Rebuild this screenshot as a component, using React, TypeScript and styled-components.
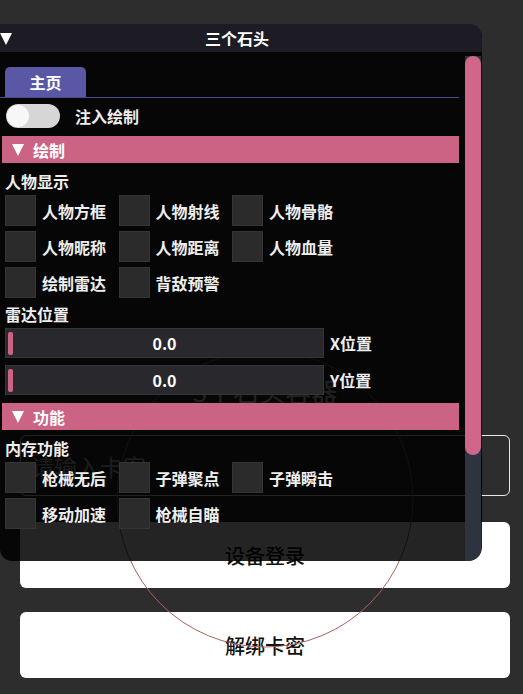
import React, { FC } from "react";
import styled, { createGlobalStyle } from "styled-components";

const GlobalStyle = createGlobalStyle`
  html, body {
    margin: 0;
    padding: 0;
    background: #2d2d2d;
  }
  body {
    font-family: "Noto Sans CJK SC", "Noto Sans", sans-serif;
  }
`;

const PINK = "#cb6384";

const checkRows1 = [
  ["人物方框", "人物射线", "人物骨骼"],
  ["人物昵称", "人物距离", "人物血量"],
  ["绘制雷达", "背敌预警"],
];

const checkRows2 = [
  ["枪械无后", "子弹聚点", "子弹瞬击"],
  ["移动加速", "枪械自瞄"],
];

const CheckGroup: FC<{ rows: string[][] }> = ({ rows }) => (
  <CheckGrid>
    {rows.flat().map((name) => (
      <CheckItem key={name}>
        <CheckBox />
        <ItemText>{name}</ItemText>
      </CheckItem>
    ))}
  </CheckGrid>
);

const App: FC<{}> = () => {
  return (
    <React.Fragment>
      <GlobalStyle />
      <Page>
        <Underlay>
          <BrandTitle>3个石头容器</BrandTitle>
          <KeyInput placeholder="请输入卡密" />
          <ActionButton $gap={26}>设备登录</ActionButton>
          <ActionButton $gap={24}>解绑卡密</ActionButton>
        </Underlay>
        <RingDecor width="523" height="694" viewBox="0 0 523 694">
          <circle cx="265" cy="499" r="148" fill="none" stroke="#a8625f" strokeWidth="1" />
        </RingDecor>

        <Window>
          <TitleBar>
            <Arrow />
            <WindowTitle>三个石头</WindowTitle>
          </TitleBar>
          <Body>
            <Content>
              <TabBar>
                <Tab>主页</Tab>
              </TabBar>
              <ToggleRow>
                <Switch>
                  <Knob />
                </Switch>
                <ItemText>注入绘制</ItemText>
              </ToggleRow>

              <SectionHeader>
                <Arrow />
                <span>绘制</span>
              </SectionHeader>
              <GroupLabel $top={6}>人物显示</GroupLabel>
              <CheckGroup rows={checkRows1} />

              <GroupLabel $top={4}>雷达位置</GroupLabel>
              <SliderRow $top={2}>
                <SliderTrack>
                  <SliderGrab />
                  0.0
                </SliderTrack>
                <ItemText>X位置</ItemText>
              </SliderRow>
              <SliderRow $top={7}>
                <SliderTrack>
                  <SliderGrab />
                  0.0
                </SliderTrack>
                <ItemText>Y位置</ItemText>
              </SliderRow>

              <SectionHeader>
                <Arrow />
                <span>功能</span>
              </SectionHeader>
              <GroupLabel $top={6}>内存功能</GroupLabel>
              <CheckGroup rows={checkRows2} />
            </Content>
            <Scrollbar>
              <ScrollThumb />
            </Scrollbar>
          </Body>
        </Window>
      </Page>
    </React.Fragment>
  );
};

export default App;

const Page = styled.div`
  position: relative;
  width: 100%;
  height: 694px;
  overflow: hidden;
  background: #2d2d2d;
`;

const Underlay = styled.div`
  display: flex;
  flex-direction: column;
  padding: 375px 13px 0 20px;
`;

const BrandTitle = styled.div`
  height: 31px;
  line-height: 31px;
  text-align: center;
  font-size: 26px;
  color: #e6e6e6;
`;

const KeyInput = styled.input`
  box-sizing: border-box;
  margin-top: 29px;
  height: 61px;
  padding: 0 10px;
  border: 1px solid #e8e8e8;
  border-radius: 6px;
  background: transparent;
  font-family: inherit;
  font-size: 23px;
  color: #fff;
  outline: none;
  &::placeholder {
    color: #c4c4c4;
  }
`;

const ActionButton = styled.button<{ $gap: number }>`
  margin-top: ${(p) => p.$gap}px;
  height: 66px;
  border: none;
  border-radius: 6px;
  background: #fff;
  font-family: inherit;
  font-size: 20px;
  font-weight: 500;
  color: #111;
`;

const RingDecor = styled.svg`
  position: absolute;
  left: 0;
  top: 0;
  pointer-events: none;
`;

const Window = styled.div`
  position: absolute;
  left: 0;
  top: 24px;
  width: 482px;
  height: 537px;
  display: flex;
  flex-direction: column;
  border-radius: 0 14px 14px 12px;
  overflow: hidden;
  background: rgba(0, 0, 0, 0.86);
  color: #eeeeee;
  font-size: 16px;
  font-weight: 700;
`;

const TitleBar = styled.div`
  position: relative;
  height: 28px;
  flex-shrink: 0;
  display: flex;
  align-items: center;
  justify-content: center;
  background: #1d1c25;
  & > i {
    position: absolute;
    left: 0;
    top: 9px;
  }
`;

const Arrow = styled.i`
  display: block;
  width: 0;
  height: 0;
  border-left: 6px solid transparent;
  border-right: 6px solid transparent;
  border-top: 12px solid #fff;
`;

const WindowTitle = styled.span`
  margin-left: -8px;
  color: #fff;
`;

const Body = styled.div`
  flex: 1;
  display: flex;
  align-items: flex-start;
`;

const Content = styled.div`
  width: 459px;
  box-sizing: border-box;
  padding-left: 5px;
  display: flex;
  flex-direction: column;
`;

const TabBar = styled.div`
  margin: 15px 0 0 -5px;
  padding-left: 5px;
  display: flex;
  border-bottom: 1px solid #4c4b8c;
`;

const Tab = styled.div`
  width: 81px;
  height: 30px;
  line-height: 30px;
  text-align: center;
  border-radius: 5px 5px 0 0;
  background: #5a58a6;
  color: #fff;
`;

const ItemText = styled.span`
  white-space: nowrap;
  color: #eeeeee;
`;

const ToggleRow = styled.div`
  margin-top: 6px;
  height: 24px;
  display: flex;
  align-items: center;
  gap: 15px;
  padding-left: 1px;
`;

const Switch = styled.div`
  width: 54px;
  height: 24px;
  border-radius: 12px;
  background: #d6d6d6;
  display: flex;
  align-items: center;
  padding-left: 1px;
  box-sizing: border-box;
`;

const Knob = styled.div`
  width: 22px;
  height: 22px;
  border-radius: 50%;
  background: #f7f7f7;
`;

const SectionHeader = styled.div`
  margin: 8px 0 0 -3px;
  height: 27px;
  display: flex;
  align-items: center;
  gap: 9px;
  padding-left: 10px;
  background: ${PINK};
  color: #fff;
`;

const GroupLabel = styled.div<{ $top: number }>`
  margin-top: ${(p) => p.$top}px;
  height: 24px;
  line-height: 24px;
`;

const CheckGrid = styled.div`
  margin-top: 2px;
  display: grid;
  grid-template-columns: repeat(3, 113.5px);
  row-gap: 5px;
`;

const CheckItem = styled.div`
  display: flex;
  align-items: center;
  gap: 6px;
`;

const CheckBox = styled.div`
  width: 31px;
  height: 31px;
  box-sizing: border-box;
  border: 1px solid #353535;
  background: #2b2b2b;
`;

const SliderRow = styled.div<{ $top: number }>`
  margin-top: ${(p) => p.$top}px;
  display: flex;
  align-items: center;
  gap: 6px;
`;

const SliderTrack = styled.div`
  position: relative;
  width: 319px;
  height: 30px;
  box-sizing: border-box;
  border: 1px solid #34343a;
  background: #29292d;
  display: flex;
  align-items: center;
  justify-content: center;
  color: #fff;
`;

const SliderGrab = styled.div`
  position: absolute;
  left: 2px;
  top: 3px;
  width: 5px;
  height: 23px;
  border-radius: 2px;
  background: ${PINK};
`;

const Scrollbar = styled.div`
  margin: 4px 0 0 6px;
  width: 16px;
  height: 505px;
  background: #2d3440;
`;

const ScrollThumb = styled.div`
  height: 399px;
  border-radius: 8px;
  background: #d0668a;
`;
